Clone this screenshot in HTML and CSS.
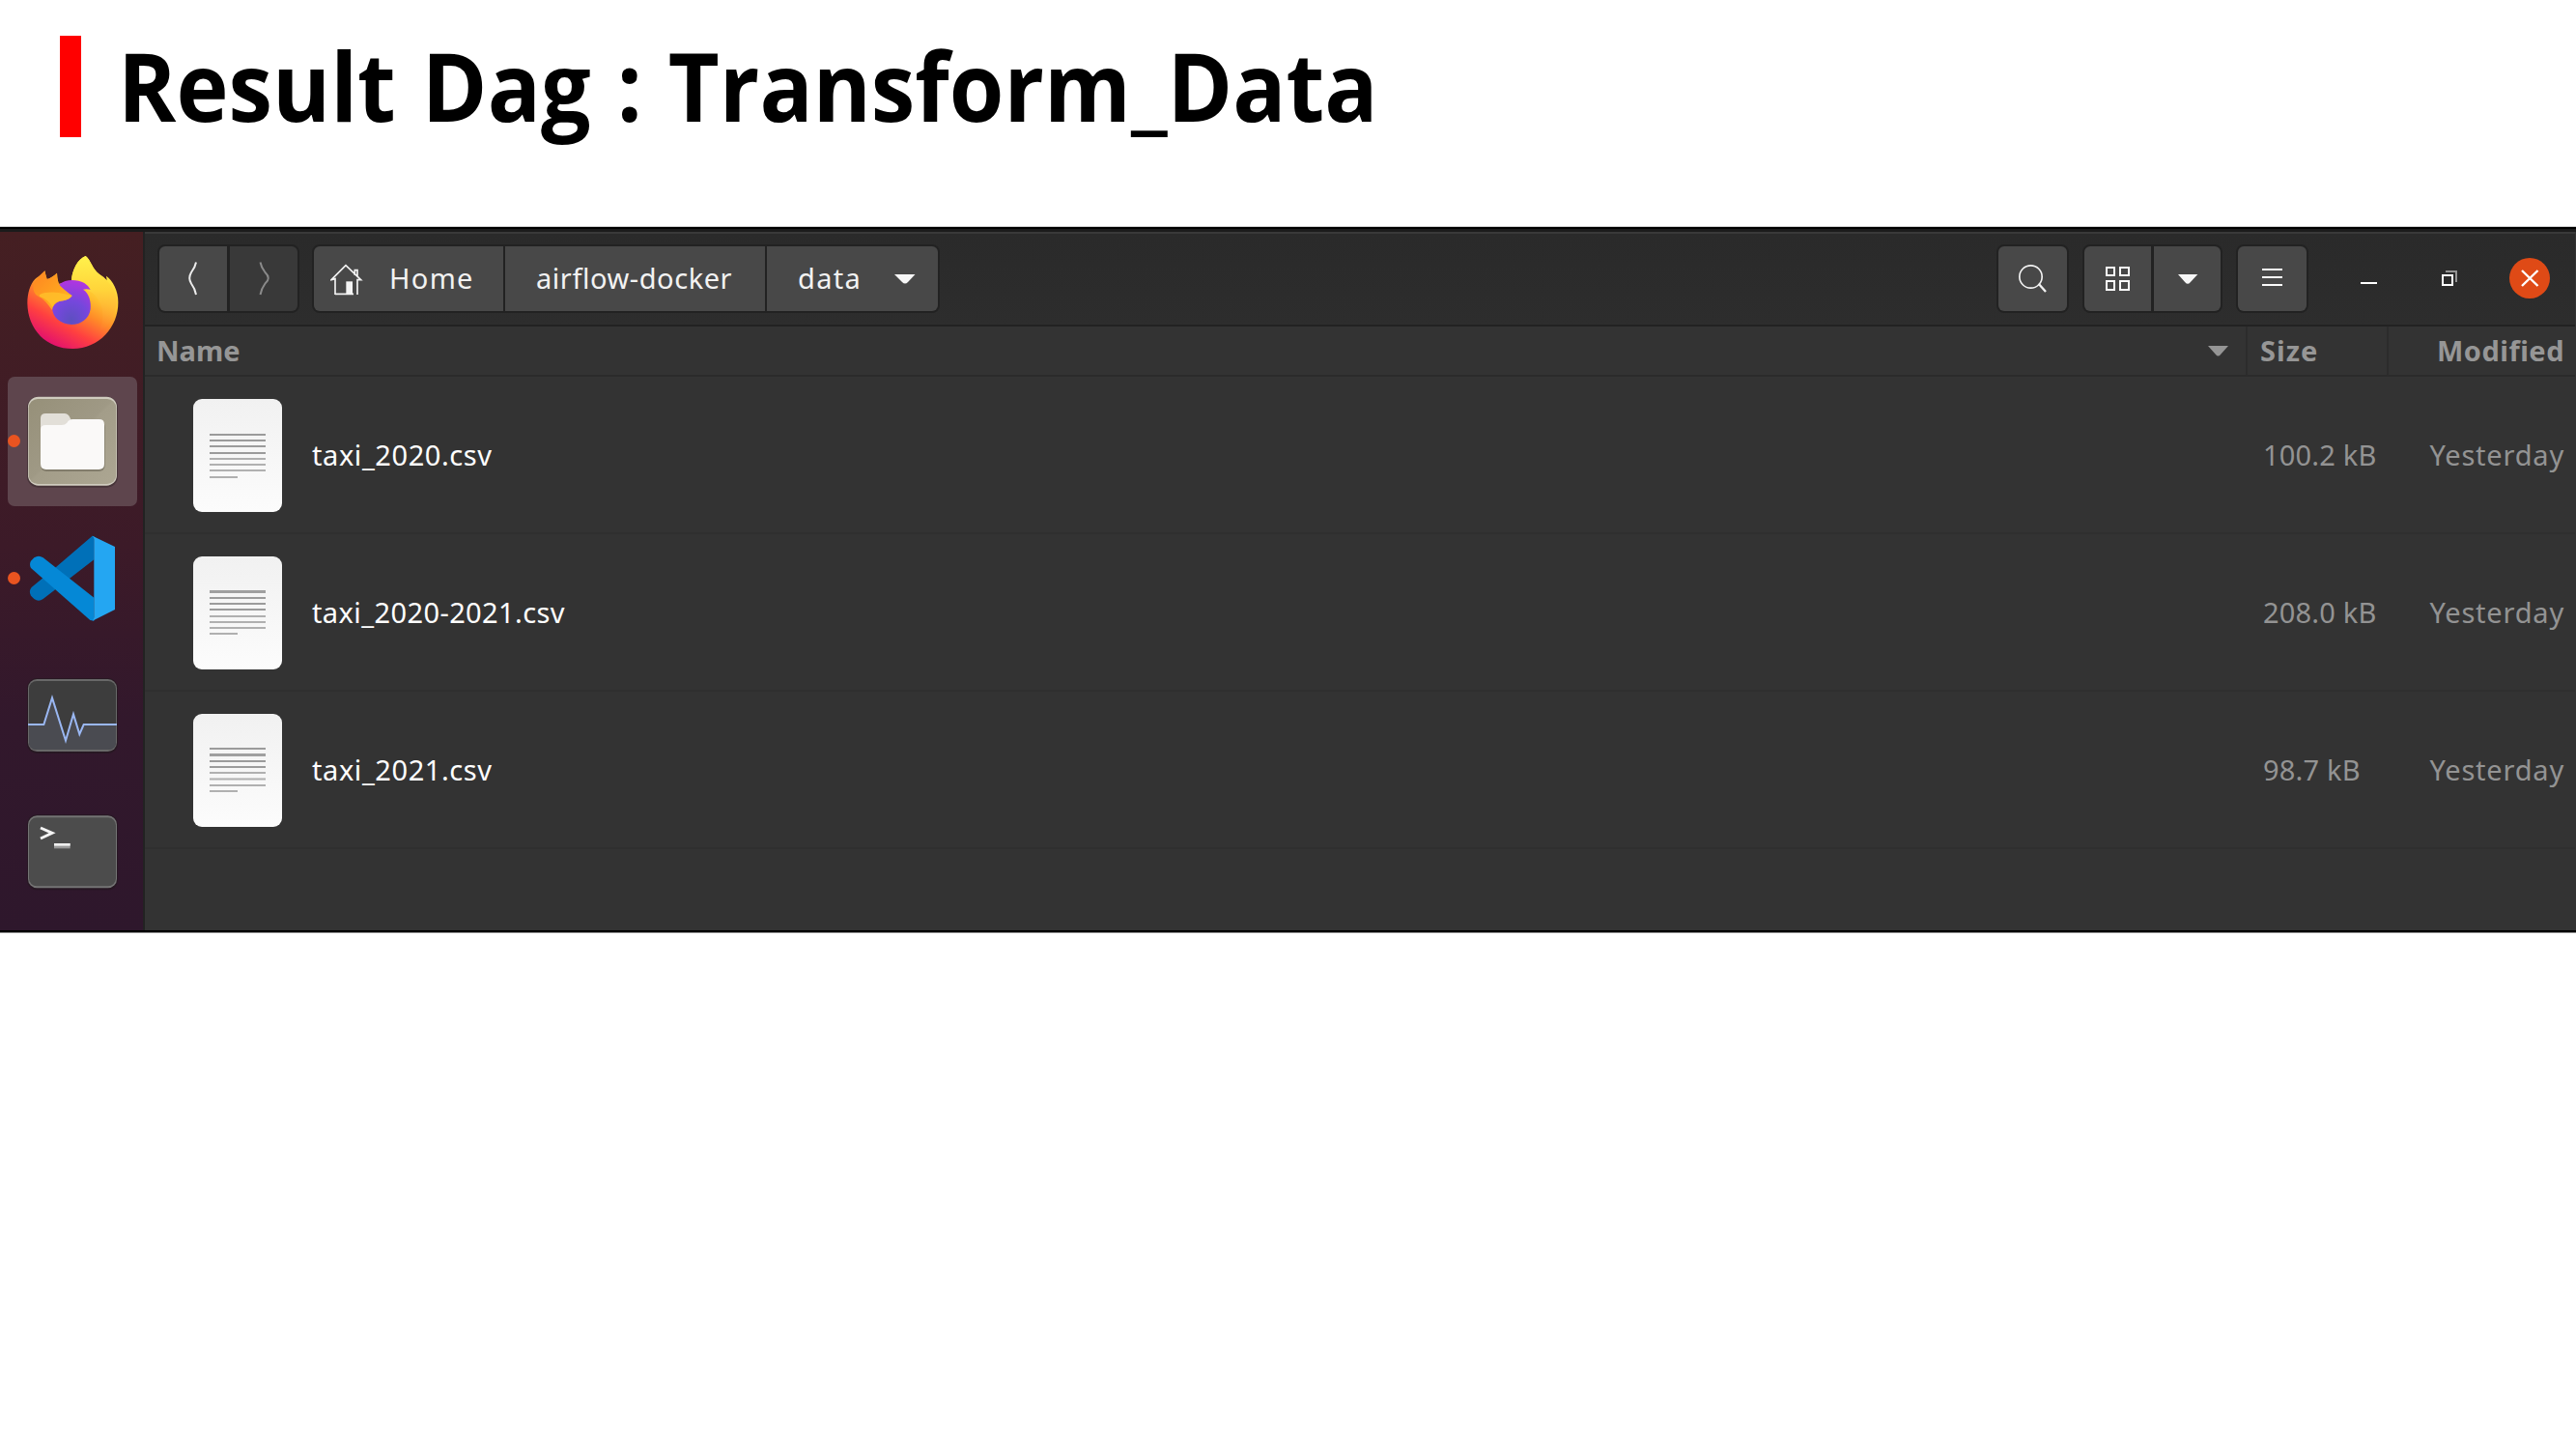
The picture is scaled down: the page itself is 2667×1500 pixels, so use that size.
FILE: index.html
```html
<!DOCTYPE html>
<html lang="en">
<head>
<meta charset="utf-8">
<title>Result Dag : Transform_Data</title>
<link rel="stylesheet" href="styles.css">
</head>
<body>
<header class="slide-title">
  <span class="accent"></span>
  <h1 class="heading"><span class="t">Result Dag : Transform_Data</span></h1>
</header>

<main class="desktop">
  <nav class="dock">
    <div class="tile">
      <svg viewBox="24 69 402 402">
        <defs>
          <linearGradient id="body" x1="0.8" y1="0.1" x2="0.3" y2="1">
            <stop offset="0" stop-color="#fff04a"/><stop offset="0.32" stop-color="#ffc42f"/><stop offset="0.52" stop-color="#ff8a28"/><stop offset="0.74" stop-color="#ff4040"/><stop offset="1" stop-color="#e00d72"/>
          </linearGradient>
          <radialGradient id="globe" cx="0.5" cy="0.9" r="0.95">
            <stop offset="0" stop-color="#5d4fc0"/><stop offset="0.45" stop-color="#7547dc"/><stop offset="1" stop-color="#b833e1"/>
          </radialGradient>
          <linearGradient id="mane" x1="0" y1="0" x2="0" y2="1">
            <stop offset="0" stop-color="#fff24c"/><stop offset="0.45" stop-color="#ffd43a"/><stop offset="1" stop-color="#ff8b34" stop-opacity="0"/>
          </linearGradient>
          <linearGradient id="muzzle" x1="0" y1="0" x2="1" y2="1">
            <stop offset="0" stop-color="#ff8422"/><stop offset="0.6" stop-color="#ffa51f"/><stop offset="1" stop-color="#ffc02a"/>
          </linearGradient>
        </defs>
        <path fill="url(#body)" d="M266 120C282 132 286 160 308 176C320 184 326 188 332 196L330 182C350 196 368 228 367 264C368 340 308 408 226 408C144 408 86 348 85 266C85 236 94 208 108 193C116 184 132 178 139 166Q142 180 146 192Q160 188 177 173Q178 190 182 206L222 200C222 166 242 128 266 120Z"/>
        <path fill="url(#mane)" d="M266 120C282 132 286 160 308 176C340 198 364 230 362 264C358 306 338 340 308 356C330 310 320 260 286 234Q250 216 222 200C222 166 242 128 266 120Z"/>
        <path fill="url(#globe)" d="M184 208C205 190 240 192 262 204Q272 210 281 224Q268 221 258 224C276 234 284 262 281 286C276 316 252 333 222 333C188 332 162 310 162 280Q163 250 186 240Z"/>
        <path fill="url(#muzzle)" d="M139 166Q142 182 146 192Q162 188 177 173Q176 198 188 214Q212 236 224 243Q215 256 196 259C180 260 164 270 162 288C150 272 136 252 120 246Q100 238 104 208Q112 190 139 166Z"/>
        <path fill="#ffc02a" opacity=".8" d="M123 240Q144 230 182 234L224 243Q215 256 196 259C180 260 168 266 164 280Q150 254 123 246Z"/>
      </svg>
    </div>
    <div class="tile active">
      <span class="dot"></span>
      <svg viewBox="24 495 402 402">
        <defs><linearGradient id="fold" x1="0" y1="0" x2="1" y2="1"><stop offset="0" stop-color="#969079"/><stop offset=".48" stop-color="#9f9985"/><stop offset=".5" stop-color="#a39d89"/><stop offset="1" stop-color="#aca692"/></linearGradient></defs>
        <rect x="84" y="557" width="282" height="282" rx="34" fill="#3c2c30" opacity=".65"/>
        <rect x="87" y="557" width="276" height="276" rx="32" fill="#d0ccbf"/>
        <rect x="89" y="564" width="272" height="264" rx="28" fill="url(#fold)"/>
        <rect x="126" y="632" width="200" height="157" rx="18" fill="#746e5e" opacity=".7"/>
        <path d="M126 660V624Q126 609 142 609H200Q211 609 217 621L222 632V660Z" fill="#e2dfd8"/>
        <path d="M126 660Q126 645 142 645H192Q202 645 208 638Q214 627 226 627H308Q324 627 324 643V766Q324 783 307 783H143Q126 783 126 766Z" fill="#faf9f8"/>
      </svg>
    </div>
    <div class="tile">
      <span class="dot"></span>
      <svg viewBox="24 -24 402 402">
        <path fill="#0070b8" d="M287 44L168 146L98 204Q88 216 96 230L106 240Q120 250 134 240L292 118V46Z"/>
        <path fill="#0588d6" d="M96 122L106 112Q120 103 134 112L292 236V308L280 306L96 144Q90 132 96 122Z"/>
        <path fill="#24a6f2" d="M287 44L357 78V273L287 308Q292 304 292 296V54Q292 48 287 44Z"/>
      </svg>
    </div>
    <div class="tile">
      <svg viewBox="24 402 402 402">
        <rect x="84" y="486" width="282" height="234" rx="30" fill="#241820" opacity=".7"/>
        <rect x="87" y="489" width="276" height="225" rx="28" fill="#686868"/>
        <rect x="90" y="495" width="270" height="213" rx="24" fill="#3d3d3d"/>
        <path d="M90 630H136L162 545L204 682L228 596L247 662L260 630H360V686Q360 708 336 708H114Q90 708 90 686Z" fill="#4a4b51"/>
        <path d="M87 630H136L162 547L204 680L228 598L247 660L260 630H363" fill="none" stroke="#9ab7f2" stroke-width="6"/>
      </svg>
    </div>
    <div class="tile">
      <svg viewBox="24 830 402 402">
        <rect x="84" y="912" width="282" height="234" rx="30" fill="#241820" opacity=".7"/>
        <rect x="87" y="915" width="276" height="225" rx="28" fill="#747474"/>
        <rect x="90" y="921" width="270" height="213" rx="24" fill="#4c4c4c"/>
        <path d="M126 953L162 969L126 986" fill="none" stroke="#f4f4f4" stroke-width="9"/>
        <rect x="168" y="1001" width="50" height="16" fill="#999"/><rect x="168" y="1001" width="50" height="8" fill="#eee"/>
      </svg>
    </div>
  </nav>

  <section class="window">
    <div class="toolbar">
      <div class="group nav">
        <button class="btn"><svg width="70" height="67" viewBox="0 0 70 67"><path d="M38 16.500Q37 22 33 27Q29.500 33 33 38.500Q37 44 38 50" fill="none" stroke="#ececec" stroke-width="2"/></svg></button>
        <button class="btn off"><svg width="70" height="67" viewBox="0 0 70 67"><path d="M31.500 16.500Q32.500 22 36.500 27Q43 33 36.500 38.500Q32.500 44 31.500 50" fill="none" stroke="#8a8a8a" stroke-width="2"/></svg></button>
      </div>
      <div class="group path">
        <button class="btn home">
          <svg width="34" height="34" viewBox="576 137 102 102"><path d="M591 236V187L579 190L624 145L671 190H660V236M591 234H648M652 176V160H660V178" fill="none" stroke="#f2f2f2" stroke-width="5"/><rect x="625" y="195" width="20" height="40" fill="#f4f4f4"/></svg>
          <span class="t l-home">Home</span></button>
        <button class="btn folder"><span class="t l-air">airflow-docker</span></button>
        <button class="btn cur"><span class="t l-data">data</span><svg width="22" height="10" viewBox="0 0 22 10"><path d="M0 0H21.500L14 8Q11 11 8 8Z" fill="#f7f7f7"/></svg></button>
      </div>
      <div class="spacer"></div>
      <div class="group search"><button class="btn"><svg width="71" height="67" viewBox="57 90 213 201"><circle cx="157.500" cy="184.500" r="35" fill="none" stroke="#f2f2f2" stroke-width="5"/><path d="M182 206L204 231" stroke="#f2f2f2" stroke-width="7"/></svg></button></div>
      <div class="group view">
        <button class="btn"><svg width="69" height="67" viewBox="324 90 207 201"><path d="M393 156h24v24h-24zM435 156h27v24h-27zM393 198h24v27h-24zM435 198h27v27h-27z" fill="none" stroke="#fafafa" stroke-width="6"/></svg></button>
        <button class="btn"><svg width="69" height="67" viewBox="540 90 207 201"><path d="M615 177H676L653 202Q645 211 637 202Z" fill="#f7f7f7"/></svg></button>
      </div>
      <div class="group menu"><button class="btn"><svg width="71" height="67" viewBox="51 90 213 201"><path d="M126 162H189M126 186H189M126 210H189" stroke="#fafafa" stroke-width="6"/></svg></button></div>
      <div class="controls">
        <svg width="17" height="42" viewBox="0 0 17 42"><path d="M0 26H17" stroke="#fff" stroke-width="2"/></svg>
        <svg class="restore" width="17" height="42" viewBox="0 0 17 42"><path d="M4 14H15V25" fill="none" stroke="#939393" stroke-width="2"/><rect x="1" y="18" width="10" height="10" fill="none" stroke="#fff" stroke-width="2"/></svg>
        <svg class="close" width="42" height="42" viewBox="0 0 42 42"><circle cx="21" cy="21" r="21" fill="#df4a16"/><path d="M13 13L29.500 29M29.500 13L13 29" stroke="#fff" stroke-width="2.400"/></svg>
      </div>
    </div>

    <div class="columns">
      <div class="c-name"><span class="t h-name">Name</span><svg width="21" height="11" viewBox="0 0 21 11"><path d="M0 0H21L13 9Q10.500 12 8 9Z" fill="#959595"/></svg></div>
      <div class="c-size"><span class="t h-size">Size</span></div>
      <div class="c-mod"><span class="t h-mod">Modified</span></div>
    </div>

    <div class="row">
      <svg class="doc" width="92" height="117" viewBox="0 0 92 117"><defs><linearGradient id="paper" x1="0" y1="0" x2="0" y2="1"><stop offset="0" stop-color="#f1f1f1"/><stop offset="1" stop-color="#fcfcfc"/></linearGradient></defs><rect width="92" height="117" rx="9" fill="url(#paper)"/><path d="M17 37H75M17 43H75M17 49H75M17 56H75" stroke="#9b9b9b" stroke-width="2"/><path d="M17 62H75M17 68H75M17 74H75M17 81H46" stroke="#b0b0b0" stroke-width="2"/></svg>
      <span class="file"><span class="t f1">taxi_2020.csv</span></span>
      <span class="size"><span class="t s1">100.2 kB</span></span>
      <span class="mod"><span class="t m">Yesterday</span></span>
    </div>
    <div class="row">
      <svg class="doc" width="92" height="117" viewBox="0 0 92 117"><rect width="92" height="117" rx="9" fill="url(#paper)"/><path d="M17 36.500H75" stroke="#9f9f9f" stroke-width="3"/><path d="M17 43H75M17 49H75M17 55H75" stroke="#9b9b9b" stroke-width="2"/><path d="M17 62H75M17 68H75M17 74H75M17 80H46" stroke="#b0b0b0" stroke-width="2"/></svg>
      <span class="file"><span class="t f2">taxi_2020-2021.csv</span></span>
      <span class="size"><span class="t s2">208.0 kB</span></span>
      <span class="mod"><span class="t m">Yesterday</span></span>
    </div>
    <div class="row">
      <svg class="doc" width="92" height="117" viewBox="0 0 92 117"><rect width="92" height="117" rx="9" fill="url(#paper)"/><path d="M17 42.500H75" stroke="#9f9f9f" stroke-width="3"/><path d="M17 36H75M17 49H75M17 55H75" stroke="#9b9b9b" stroke-width="2"/><path d="M17 61H75M17 67.500H75M17 74H75M17 80H46" stroke="#b0b0b0" stroke-width="2"/></svg>
      <span class="file"><span class="t f1">taxi_2021.csv</span></span>
      <span class="size"><span class="t s3">98.7 kB</span></span>
      <span class="mod"><span class="t m">Yesterday</span></span>
    </div>
  </section>
</main>
</body>
</html>
```
FILE: styles.css
```css
* { box-sizing: border-box; }
body {
  margin: 0;
  background: #fff;
  font-family: "Noto Sans", "Open Sans", sans-serif;
  font-size: 29px;
  line-height: 40px;
}
svg { display: block; flex: none; }
.t { display: inline-block; white-space: nowrap; }

/* Slide heading */
.slide-title { display: flex; height: 234px; padding: 37px 0 0 62px; }
.accent { width: 22px; height: 105px; background: #f00; }
.heading {
  margin: 0 0 0 38px;
  font: bold 98px/102px "Open Sans", sans-serif;
  color: #000;
}
.heading .t { transform: scaleX(.934); transform-origin: 0 0; word-spacing: 3.5px; }

/* Captured desktop */
.desktop {
  display: flex;
  height: 732px;
  border-top: 1px solid #cfcfcf;
  border-bottom: 1px solid #8a8a8a;
  background: #333;
  box-shadow: inset 0 2px #000, inset 0 5px #1b1b1b, inset 0 -2px #000;
  padding: 5px 1px 2px 0;
}
.dock {
  display: flex;
  flex-direction: column;
  gap: 8px;
  width: 150px;
  padding: 8px 6px 0 8px;
  border-right: 2px solid #222;
  background: linear-gradient(#451f22, #3c1a28 45%, #32182c 70%, #2e172c);
}
.tile { position: relative; width: 134px; height: 134px; border-radius: 7px; flex: none; }
.tile svg { width: 134px; height: 134px; }
.tile.active { background: #5e454d; }
.dot { position: absolute; left: 0; top: 60px; width: 13px; height: 13px; border-radius: 50%; background: #e95420; }

.window { flex: 1; display: flex; flex-direction: column; background: #333; }
.toolbar {
  display: flex;
  height: 98px;
  padding: 11px 26px 0 13px;
  border-top: 2px solid #393939;
  border-bottom: 2px solid #222;
  background: linear-gradient(#2a2a2a, #2d2d2d);
}
.group { display: flex; gap: 2px; height: 71px; padding: 2px; border-radius: 8px; background: #222; overflow: hidden; }
.btn {
  display: flex;
  align-items: center;
  height: 67px;
  padding: 0;
  border: 0;
  background: #484848;
  color: #f2f2f2;
  font: inherit;
}
.btn .t { margin-bottom: 2px; }
.btn:first-child { border-radius: 6px 0 0 6px; }
.btn:last-child { border-radius: 0 6px 6px 0; }
.btn:only-child { border-radius: 6px; }
.btn.off { background: #393939; }
.nav, .view { gap: 3px; }
.path { margin-left: 13px; }
.home { width: 196px; padding-left: 17px; }
.home .t { margin-left: 27px; letter-spacing: 1.3px; }
.folder { width: 269px; padding-left: 32px; letter-spacing: .55px; }
.cur { width: 177px; padding-left: 32px; letter-spacing: 1.3px; }
.cur svg { margin: 0 23px 0 auto; }
.spacer { flex: 1; }
.view { margin-left: 14px; }
.menu { margin-left: 14px; }
.controls { display: flex; align-items: center; height: 71px; margin-left: 54px; }
.controls svg { margin-bottom: 1px; }
.controls .restore { margin-left: 67px; }
.controls .close { margin-left: 53px; }

/* Column headings */
.columns {
  display: flex;
  align-items: stretch;
  height: 52px;
  border-bottom: 2px solid #2b2b2b;
  color: #969696;
  font-weight: 700;
}
.columns > div { display: flex; align-items: center; }
.c-name { flex: 1; padding: 0 18px 0 12px; justify-content: space-between; border-right: 2px solid #2c2c2c; }
.c-size { width: 146px; padding-left: 13px; border-right: 2px solid #2c2c2c; letter-spacing: 1px; }
.c-mod { width: 193px; justify-content: flex-end; padding-right: 11px; letter-spacing: .5px; }

/* Files */
.row {
  display: flex;
  align-items: center;
  height: 163px;
  border-bottom: 2px solid #2f2f2f;
  padding-left: 50px;
  color: #fff;
}
.doc { margin-top: 2px; }
.file { flex: 1; margin-left: 31px; }
.f1 { letter-spacing: .58px; }
.f2 { letter-spacing: .4px; }
.size { width: 128px; color: #939393; letter-spacing: .2px; }
.mod { width: 195px; padding-right: 11px; text-align: right; color: #939393; letter-spacing: .8px; }
```
